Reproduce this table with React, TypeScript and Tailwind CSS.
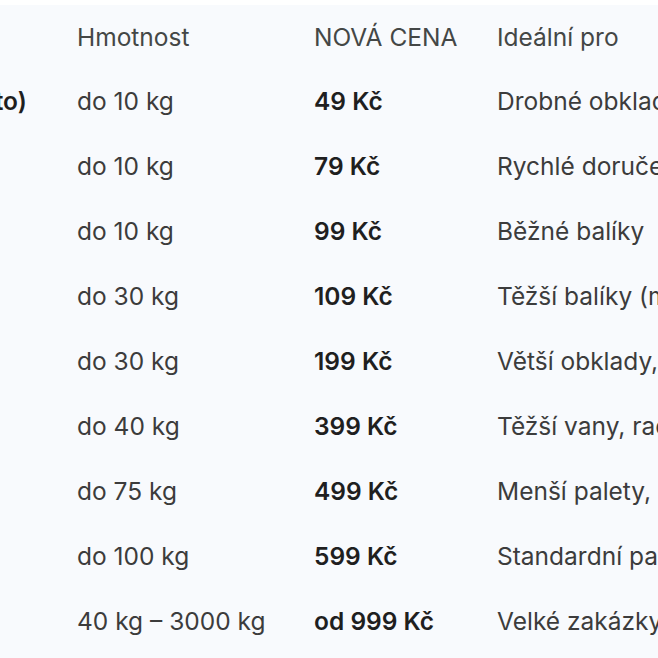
import React from 'react';

type Row = { service: string; weight: string; price: string; use: string };

const rows: Row[] = [
  { service: 'Balíkovna (výdejní místo)', weight: 'do 10 kg', price: '49 Kč', use: 'Drobné obklady, spárovačky' },
  { service: 'Zásilkovna', weight: 'do 10 kg', price: '79 Kč', use: 'Rychlé doručení na adresu' },
  { service: 'PPL', weight: 'do 10 kg', price: '99 Kč', use: 'Běžné balíky' },
  { service: 'DPD', weight: 'do 30 kg', price: '109 Kč', use: 'Těžší balíky (malé baterie)' },
  { service: 'GLS', weight: 'do 30 kg', price: '199 Kč', use: 'Větší obklady, dlažba' },
  { service: 'Geis', weight: 'do 40 kg', price: '399 Kč', use: 'Těžší vany, radiátory' },
  { service: 'Paleta', weight: 'do 75 kg', price: '499 Kč', use: 'Menší palety, vany' },
  { service: 'Paleta', weight: 'do 100 kg', price: '599 Kč', use: 'Standardní palety' },
  { service: 'Kamion', weight: '40 kg – 3000 kg', price: 'od 999 Kč', use: 'Velké zakázky' },
];

const App: React.FC = () => {
  return (
    <div className="h-[658px] w-[658px] overflow-hidden bg-white pt-[5px]">
      <div className="h-full overflow-hidden bg-[#f8fafd] font-['Inter',sans-serif] text-[24.5px] text-[#444746]">
        <div className="ml-[-292px] grid w-max grid-cols-[346px_237px_183px_auto] whitespace-nowrap">
          <div className="flex h-[64px] items-center pl-[23px]">Služba</div>
          <div className="flex h-[64px] items-center pl-[23px]">Hmotnost</div>
          <div className="flex h-[64px] items-center pl-[23px]">NOVÁ CENA</div>
          <div className="flex h-[64px] items-center pl-[23px] pr-[23px]">Ideální pro</div>
          {rows.map((r, i) => (
            <React.Fragment key={i}>
              <div className="flex h-[65px] items-center pl-[23px] font-semibold text-[#1f1f1f]">{r.service}</div>
              <div className="flex h-[65px] items-center pl-[23px] text-[#3c3c3c]">{r.weight}</div>
              <div className="flex h-[65px] items-center pl-[23px] font-semibold text-[#1f1f1f]">{r.price}</div>
              <div className="flex h-[65px] items-center pl-[23px] pr-[23px] text-[#3c3c3c]">{r.use}</div>
            </React.Fragment>
          ))}
        </div>
      </div>
    </div>
  );
};

export default App;
